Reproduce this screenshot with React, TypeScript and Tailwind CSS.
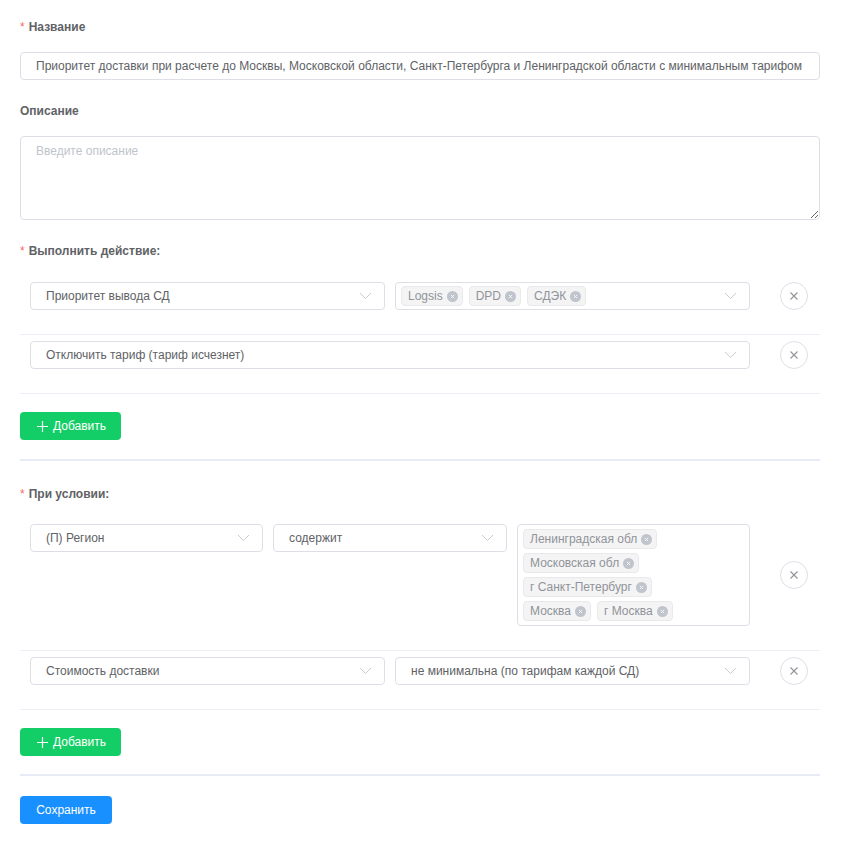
import React from 'react';

const font = { fontFamily: '"Liberation Sans", Arial, sans-serif' };

const Chevron: React.FC = () => (
  <svg width="13" height="8" viewBox="0 0 13 8" className="shrink-0">
    <path d="M1 1l5.5 5.5L12 1" fill="none" stroke="#c8ccd3" strokeWidth="1" />
  </svg>
);

const Select: React.FC<{ value?: string; className?: string }> = ({ value, className = '' }) => (
  <div className={`flex items-center h-[28px] border border-[#dcdfe6] rounded-[4px] bg-white pl-[15px] pr-[12px] ${className}`}>
    <div className="flex-1 text-[12px] text-[#606266] truncate">{value}</div>
    <Chevron />
  </div>
);

const Tag: React.FC<{ label: string }> = ({ label }) => (
  <span className="inline-flex items-center h-[20px] pl-[6px] pr-[4px] gap-[4px] bg-[#f4f4f5] border border-[#e9e9eb] rounded-[4px] text-[12px] text-[#909399]">
    {label}
    <span className="flex items-center justify-center w-[11px] h-[11px] rounded-full bg-[#c0c4cc]">
      <svg width="5" height="5" viewBox="0 0 6 6">
        <path d="M1 1l4 4M5 1L1 5" stroke="#fff" strokeWidth="1" />
      </svg>
    </span>
  </span>
);

const CloseBtn: React.FC = () => (
  <button className="flex items-center justify-center w-[28px] h-[28px] rounded-full border border-[#dcdfe6] bg-white shrink-0 ml-[30px]">
    <svg width="10" height="10" viewBox="0 0 10 10">
      <path d="M1.5 1.5l7 7M8.5 1.5l-7 7" stroke="#909399" strokeWidth="1.1" />
    </svg>
  </button>
);

const Label: React.FC<{ required?: boolean; children: React.ReactNode }> = ({ required, children }) => (
  <div className="h-[20px] flex items-center text-[12px] font-bold text-[#606266]">
    {required && <span className="text-[#f56c6c] mr-[4px] font-normal">*</span>}
    {children}
  </div>
);

const Row: React.FC<{ first?: boolean; children: React.ReactNode }> = ({ first, children }) => (
  <div className={`flex items-center pl-[10px] pb-[24px] border-b border-[#ebeef5] ${first ? '' : 'pt-[6px]'}`}>
    <div className="w-[720px] flex items-start gap-[10px]">{children}</div>
    <CloseBtn />
  </div>
);

const AddButton: React.FC = () => (
  <button className="flex items-center h-[28px] w-[101px] pl-[17px] rounded-[4px] bg-[#13ce66] text-white text-[12px]">
    <svg width="11" height="11" viewBox="0 0 11 11" className="mr-[5px]">
      <path d="M5.5 0v11M0 5.5h11" stroke="#fff" strokeWidth="1.2" />
    </svg>
    Добавить
  </button>
);

export default function App() {
  return (
    <div className="min-h-screen bg-white px-[20px] w-[840px]" style={font}>
      <div className="pt-[17px]">
        <Label required>Название</Label>
        <div className="mt-[15px] h-[28px] flex items-center border border-[#dcdfe6] rounded-[4px] pl-[15px] text-[12px] text-[#606266] whitespace-nowrap overflow-hidden">
          Приоритет доставки при расчете до Москвы, Московской области, Санкт-Петербурга и Ленинградской области с минимальным тарифом
        </div>

        <div className="mt-[21px]">
          <Label>Описание</Label>
        </div>
        <textarea
          placeholder="Введите описание"
          className="mt-[15px] block w-full h-[84px] border border-[#dcdfe6] rounded-[4px] px-[15px] py-[5px] text-[12px] text-[#606266] placeholder:text-[#c0c4cc] outline-none"
        />

        <div className="mt-[21px]">
          <Label required>Выполнить действие:</Label>
        </div>
        <div className="mt-[21px]">
          <Row first>
            <Select value="Приоритет вывода СД" className="w-[355px]" />
            <div className="w-[355px] flex items-center h-[28px] border border-[#dcdfe6] rounded-[4px] pl-[5px] pr-[12px]">
              <div className="flex-1 flex gap-[6px]">
                <Tag label="Logsis" />
                <Tag label="DPD" />
                <Tag label="СДЭК" />
              </div>
              <Chevron />
            </div>
          </Row>
          <Row>
            <Select value="Отключить тариф (тариф исчезнет)" className="w-[720px]" />
          </Row>
        </div>
        <div className="mt-[18px]">
          <AddButton />
        </div>
        <div className="mt-[19px] h-[2px] bg-[#e6ebf5]" />

        <div className="mt-[23px]">
          <Label required>При условии:</Label>
        </div>
        <div className="mt-[14px]">
          <Row>
            <Select value="(П) Регион" className="w-[233px]" />
            <Select value="содержит" className="w-[234px]" />
            <div className="w-[233px] min-h-[102px] border border-[#dcdfe6] rounded-[4px] pl-[5px] pr-[30px] pt-[4px]">
              <div className="flex flex-wrap gap-x-[6px] gap-y-[4px]">
                <Tag label="Ленинградская обл" />
                <Tag label="Московская обл" />
                <Tag label="г Санкт-Петербург" />
                <Tag label="Москва" />
                <Tag label="г Москва" />
              </div>
            </div>
          </Row>
          <Row>
            <Select value="Стоимость доставки" className="w-[355px]" />
            <Select value="не минимальна (по тарифам каждой СД)" className="w-[355px]" />
          </Row>
        </div>
        <div className="mt-[18px]">
          <AddButton />
        </div>
        <div className="mt-[18px] h-[2px] bg-[#e6ebf5]" />

        <button className="mt-[20px] h-[28px] w-[92px] rounded-[4px] bg-[#1890ff] text-white text-[12px]">
          Сохранить
        </button>
      </div>
    </div>
  );
}
